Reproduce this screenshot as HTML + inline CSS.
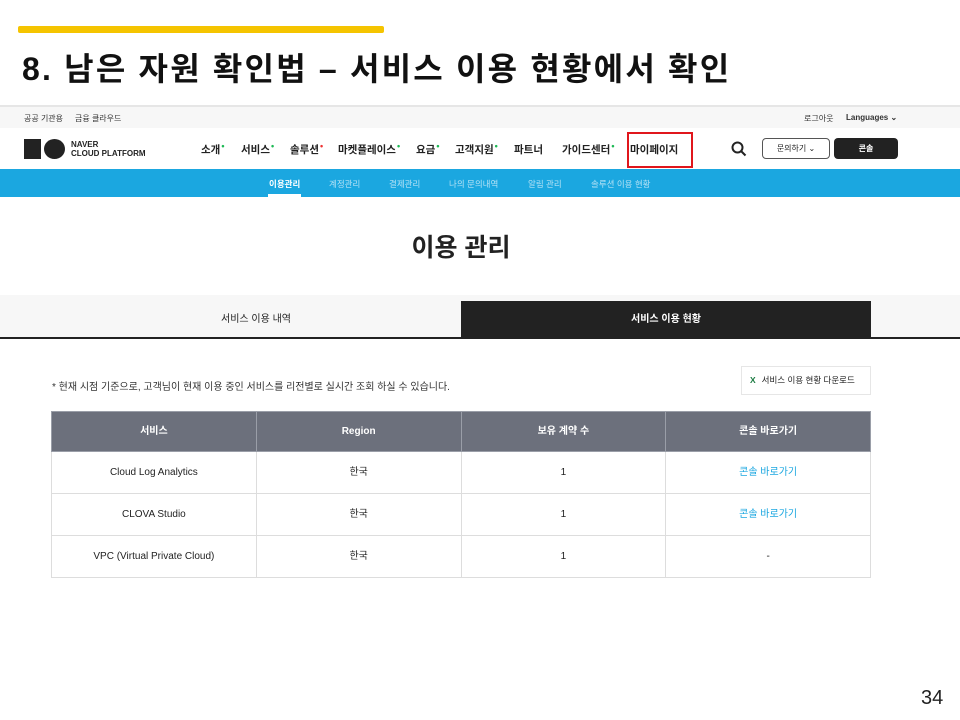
<!DOCTYPE html>
<html><head><meta charset="utf-8"><style>
*{margin:0;padding:0;box-sizing:border-box}
body{width:960px;height:720px;background:#fff;font-family:"Liberation Sans","Noto Sans CJK KR",sans-serif;position:relative;overflow:hidden;color:#222}
.a{position:absolute}
.n{position:absolute;top:142px;font-size:10.5px;font-weight:bold;color:#222;white-space:nowrap}
.g{color:#1db954;font-size:9px;position:relative;top:-4px;margin-left:1px}
.r{color:#e33;font-size:9px;position:relative;top:-4px;margin-left:1px}
table{border-collapse:collapse}
td,th{border:1px solid #ddd;text-align:center;vertical-align:middle;font-size:10px;height:42px;width:205px;line-height:12px}
th{background:#6c707c;color:#fff;border-color:#9a9ea8;height:40px;font-weight:bold}
</style></head><body>
<div class="a" style="left:18px;top:26px;width:366px;height:7px;background:#f5c400;border-radius:2px"></div>
<div class="a" style="left:22px;top:44px;font-size:32px;font-weight:bold;color:#111;letter-spacing:2.2px;white-space:nowrap">8. 남은 자원 확인법 – 서비스 이용 현황에서 확인</div>
<div class="a" style="left:0;top:105px;width:960px;height:2px;background:#e6e6e6"></div>
<div class="a" style="left:0;top:107px;width:960px;height:21px;background:#f7f7f7;font-size:8px;color:#333">
<span class="a" style="left:24px;top:6px">공공 기관용</span><span class="a" style="left:75px;top:6px">금융 클라우드</span>
<span class="a" style="left:804px;top:6px">로그아웃</span><span class="a" style="left:846px;top:6px;font-weight:bold">Languages ⌄</span></div>
<div class="a" style="left:24px;top:139px;width:17px;height:20px;background:#222"></div>
<div class="a" style="left:44px;top:139px;width:21px;height:20px;background:#222;border-radius:50%"></div>
<div class="a" style="left:71px;top:140px;font-size:8px;font-weight:bold;line-height:9px;color:#222">NAVER<br>CLOUD PLATFORM</div>
<span class="n" style="left:201px">소개<span class="g">•</span></span>
<span class="n" style="left:241px">서비스<span class="g">•</span></span>
<span class="n" style="left:290px">솔루션<span class="r">•</span></span>
<span class="n" style="left:338px">마켓플레이스<span class="g">•</span></span>
<span class="n" style="left:416px">요금<span class="g">•</span></span>
<span class="n" style="left:455px">고객지원<span class="g">•</span></span>
<span class="n" style="left:514px">파트너</span>
<span class="n" style="left:562px">가이드센터<span class="g">•</span></span>
<span class="n" style="left:630px">마이페이지</span>
<div class="a" style="left:627px;top:132px;width:66px;height:36px;border:2px solid #e0161c"></div>
<svg class="a" style="left:731px;top:141px" width="16" height="16"><circle cx="6.5" cy="6.5" r="5" stroke="#222" stroke-width="2" fill="none"/><line x1="10" y1="10" x2="14.5" y2="14.5" stroke="#222" stroke-width="2"/></svg>
<div class="a" style="left:762px;top:138px;width:68px;height:21px;border:1px solid #555;border-radius:4px;font-size:8px;text-align:center;line-height:19px">문의하기 ⌄</div>
<div class="a" style="left:834px;top:138px;width:64px;height:21px;background:#222;border-radius:4px;font-size:8px;color:#fff;text-align:center;line-height:21px;font-weight:bold">콘솔</div>
<div class="a" style="left:0;top:169px;width:960px;height:28px;background:#1ba7e0;font-size:8.5px;color:#b5e2f5">
<span class="a" style="left:269px;top:9px;color:#fff;font-weight:bold">이용관리</span>
<div class="a" style="left:268px;top:25px;width:33px;height:3px;background:#fff"></div>
<span class="a" style="left:329px;top:9px">계정관리</span><span class="a" style="left:389px;top:9px">결제관리</span><span class="a" style="left:449px;top:9px">나의 문의내역</span><span class="a" style="left:528px;top:9px">알림 관리</span><span class="a" style="left:591px;top:9px">솔루션 이용 현황</span></div>
<div class="a" style="left:0;top:228px;width:922px;text-align:center;font-size:25px;font-weight:bold;color:#222">이용 관리</div>
<div class="a" style="left:0;top:295px;width:960px;height:43px;background:#f7f7f7"></div>
<div class="a" style="left:51px;top:301px;width:410px;height:37px;background:#f7f7f7;font-size:10px;text-align:center;line-height:37px">서비스 이용 내역</div>
<div class="a" style="left:461px;top:301px;width:410px;height:37px;background:#222;color:#fff;font-size:10px;font-weight:bold;text-align:center;line-height:37px">서비스 이용 현황</div>
<div class="a" style="left:0;top:337px;width:960px;height:2px;background:#222"></div>
<div class="a" style="left:52px;top:378px;font-size:10px;color:#333">* 현재 시점 기준으로, 고객님이 현재 이용 중인 서비스를 리전별로 실시간 조회 하실 수 있습니다.</div>
<div class="a" style="left:741px;top:366px;width:130px;height:29px;border:1px solid #e6e6e6;font-size:8.5px;line-height:27px;padding-left:8px"><span style="color:#1d7c43;font-weight:bold;margin-right:6px">X</span>서비스 이용 현황 다운로드</div>
<table class="a" style="left:51px;top:411px;width:820px">
<tr><th>서비스</th><th>Region</th><th>보유 계약 수</th><th>콘솔 바로가기</th></tr>
<tr><td>Cloud Log Analytics</td><td>한국</td><td>1</td><td style="color:#1ba7e0">콘솔 바로가기</td></tr>
<tr><td>CLOVA Studio</td><td>한국</td><td>1</td><td style="color:#1ba7e0">콘솔 바로가기</td></tr>
<tr><td>VPC (Virtual Private Cloud)</td><td>한국</td><td>1</td><td>-</td></tr>
</table>
<div class="a" style="left:921px;top:687px;font-size:20px;color:#222">34</div>
</body></html>
